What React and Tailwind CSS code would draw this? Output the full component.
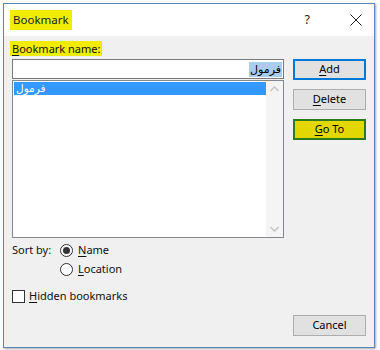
import React from "react";

const U = ({ children }) => <span className="underline underline-offset-2">{children}</span>;

function Radio({ checked }) {
  return (
    <span className="w-[13px] h-[13px] rounded-full border border-[#333] bg-white flex items-center justify-center shrink-0">
      {checked && <span className="w-[7px] h-[7px] rounded-full bg-[#333]" />}
    </span>
  );
}

function Btn({ children, cls }) {
  return (
    <div className={"w-[73px] h-[21px] flex items-center justify-center text-[11px] text-black " + cls}>
      {children}
    </div>
  );
}

export default function App() {
  return (
    <div className="w-[380px] h-[350px] bg-white" style={{ fontFamily: '"Noto Sans", "DejaVu Sans", sans-serif' }}>
      <div className="relative top-[3px] left-[3px] w-[372px] h-[345px] border border-[#5d86b6] bg-[#f0f0f0] flex flex-col shadow-[1px_1px_2px_rgba(0,0,0,0.35)]">
        {/* title bar */}
        <div className="h-[32px] bg-white flex items-center pl-[6px] pr-[10px] shrink-0">
          <span className="bg-[#f2ec00] px-[3px] h-[20px] flex items-center text-[11.5px] text-[#222]">Bookmark</span>
          <span className="ml-auto text-[12.5px] text-[#222] mr-[40px]">?</span>
          <svg width="12" height="12" viewBox="0 0 12 12" className="mr-[2px]">
            <path d="M0.5 0.5 L11.5 11.5 M11.5 0.5 L0.5 11.5" stroke="#222" strokeWidth="1" />
          </svg>
        </div>
        {/* content */}
        <div className="flex flex-col pl-[6px] pr-[8px]">
          <div className="mt-[5px] h-[15px] flex">
            <span className="bg-[#f2ec00] px-[2px] flex items-center text-[11px] text-[#111] leading-none">
              <U>B</U>ookmark name:
            </span>
          </div>
          <div className="flex mt-[3px]">
            <div className="ml-[2px] w-[272px] flex flex-col">
              <div className="h-[20px] border border-[#7a7a7a] bg-white flex items-center justify-end pr-[1px]">
                <span className="bg-[#a9cdee] text-[11px] leading-[15px] px-[1px] text-black" style={{ fontFamily: '"DejaVu Sans", sans-serif' }} dir="rtl">فرمول</span>
              </div>
              <div className="mt-[1px] h-[158px] border border-[#828790] bg-white flex">
                <div className="flex-1 pt-[1px] pl-[1px]">
                  <div className="h-[13px] bg-[#3399ff] text-white text-[10.5px] leading-[13px] pl-[2px] flex items-center" style={{ fontFamily: '"DejaVu Sans", sans-serif' }}>
                    <span dir="rtl">فرمول</span>
                  </div>
                </div>
                <div className="w-[17px] bg-[#f4f4f4] flex flex-col items-center justify-between py-[5px]">
                  <svg width="9" height="6" viewBox="0 0 9 6"><path d="M0.5 5 L4.5 1 L8.5 5" stroke="#c2c2c2" strokeWidth="1.3" fill="none" /></svg>
                  <svg width="9" height="6" viewBox="0 0 9 6"><path d="M0.5 1 L4.5 5 L8.5 1" stroke="#c2c2c2" strokeWidth="1.3" fill="none" /></svg>
                </div>
              </div>
            </div>
            <div className="ml-[9px] flex flex-col gap-[9px]">
              <Btn cls="border-2 border-[#0078d7] bg-[#e1e1e1]"><span><U>A</U>dd</span></Btn>
              <Btn cls="border border-[#adadad] bg-[#e1e1e1]"><span><U>D</U>elete</span></Btn>
              <Btn cls="border-2 border-[#2d7a1f] bg-[#e2d800]"><span><U>G</U>o To</span></Btn>
            </div>
          </div>
          {/* sort by */}
          <div className="ml-[2px] mt-[5px] h-[14px] flex items-center text-[11px] text-[#111]">
            <span className="w-[48px]">Sort by:</span>
            <Radio checked />
            <span className="ml-[5px]"><U>N</U>ame</span>
          </div>
          <div className="ml-[50px] mt-[5px] h-[14px] flex items-center text-[11px] text-[#111]">
            <Radio />
            <span className="ml-[5px]"><U>L</U>ocation</span>
          </div>
          <div className="ml-[2px] mt-[14px] h-[13px] flex items-center text-[11px] text-[#111]">
            <span className="w-[13px] h-[13px] border border-[#333] bg-white shrink-0" />
            <span className="ml-[4px]"><U>H</U>idden bookmarks</span>
          </div>
          <div className="mt-[12px] flex justify-end">
            <Btn cls="border border-[#adadad] bg-[#e1e1e1]">Cancel</Btn>
          </div>
        </div>
      </div>
    </div>
  );
}
